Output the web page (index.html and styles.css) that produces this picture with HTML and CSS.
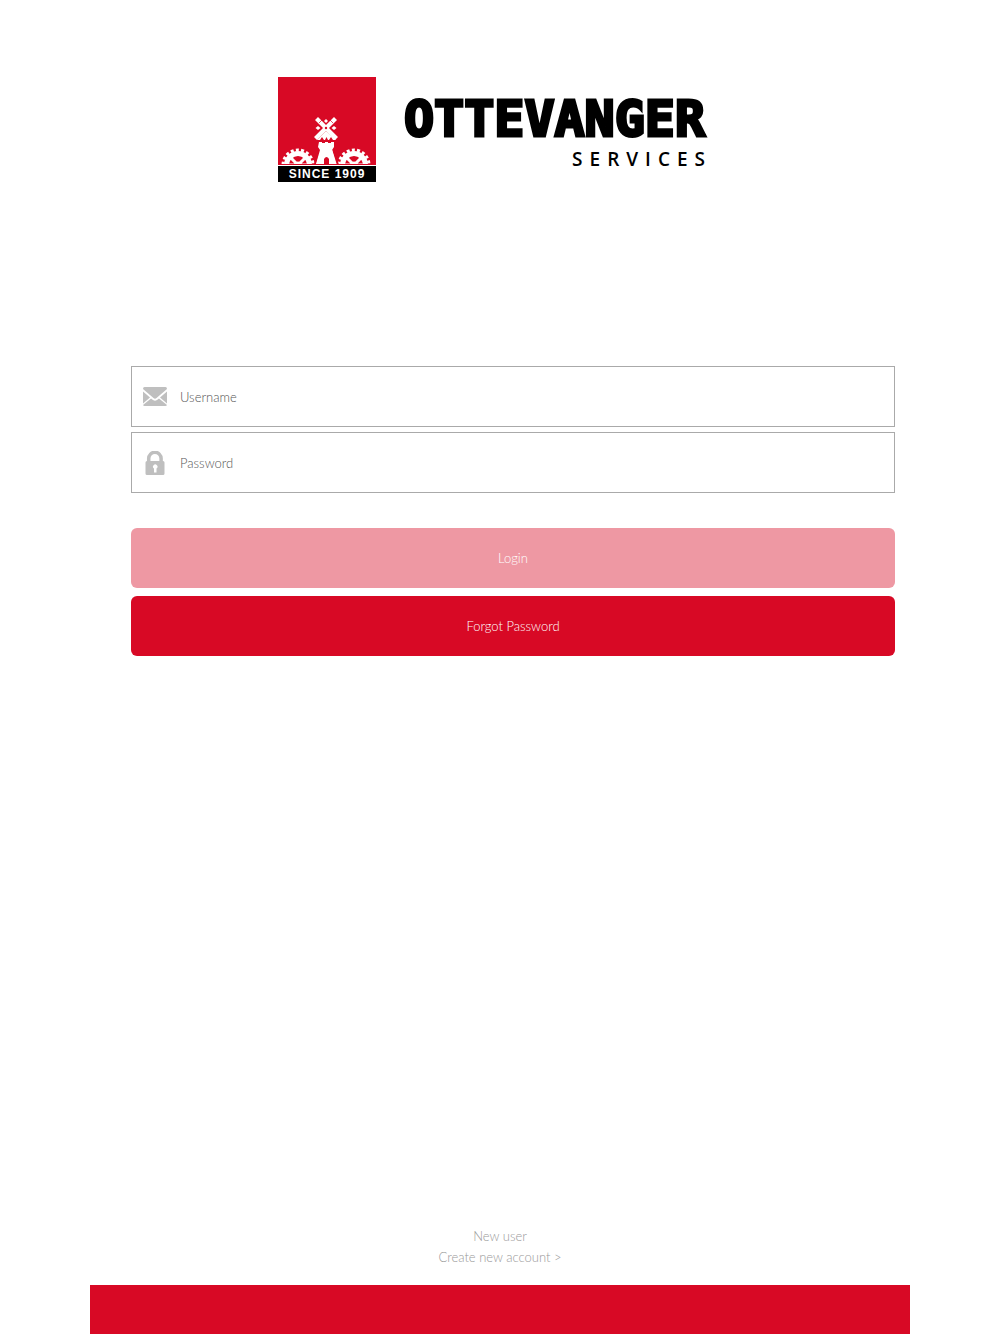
FILE: index.html
```html
<!DOCTYPE html>
<html lang="en">
<head>
<meta charset="utf-8">
<meta name="viewport" content="width=device-width, initial-scale=1">
<title>Ottevanger Services</title>
<link rel="stylesheet" href="styles.css">
</head>
<body>
<header class="brand">
  <div class="mark">
    <svg class="mark-art" viewBox="0 0 98 88" aria-hidden="true">
      <defs>
        <clipPath id="ground"><rect width="98" height="87"/></clipPath>
        <g id="gear" fill="none" stroke="#fff">
          <circle r="11.5" stroke-width="5"/>
          <circle r="15" stroke-width="3" stroke-dasharray="3 2.236"/>
          <path d="M-12 0H12M-8.500-8.500L0 0L8.500-8.500" stroke-width="3"/>
          <circle r="2" stroke-width="3"/>
        </g>
      </defs>
      <rect width="98" height="88" fill="#d80925"/>
      <g clip-path="url(#ground)">
        <use href="#gear" x="20" y="88"/>
        <use href="#gear" x="76" y="88"/>
        <path d="M37 88L42 72V65H55V72L60 88Z" fill="#fff" stroke="#d80925" stroke-width="2"/>
        <path d="M41 65h3v2h3v-2h3v2h3v-2h3v5l-2 3 4 14H38l4-14-2-3z" fill="#fff"/>
        <path d="M46 88v-6q2.500-4 5 0v6z" fill="#d80925"/>
        <path d="M48 54L58 63H39Z" fill="#fff"/>
        <path d="M42 63l2-3 2 3zM47 63l1.500-3 1.500 3zM51 63l2-3 2 3z" fill="#d80925"/>
      </g>
      <path d="M40 40L48 48L56 40L59 43L51 51L60 60L57 63L48 54L39 63L36 60L45 51L37 43Z" fill="#fff"/>
      <path d="M41 46l3-3M55 46l-3-3" stroke="#d80925" stroke-width=".7"/>
      <path d="M48 42l2 2-2 2-2-2zM37.500 51l2.500-2 2.500 2-2.500 2zM53.500 51l2.500-2 2.500 2-2.500 2z" fill="#fff"/>
      <circle cx="48" cy="51" r="1.200" fill="#d80925"/>
    </svg>
    <div class="since">SINCE 1909</div>
  </div>
  <div class="names">
    <h1 class="name">OTTEVANGER</h1>
    <p class="division">SERVICES</p>
  </div>
</header>

<main class="content">
  <form class="login">
    <label class="field">
      <svg class="icon" viewBox="0 0 24 24" aria-hidden="true">
        <path d="M1.500 2H22.500Q24 2 24 4L13.500 13Q12 14.500 10.500 13L0 4Q0 2 1.500 2ZM0 6.500L7 12.500L0 18.500ZM24 6.500V18.500L17 12.500ZM8 13.500L10 15Q12 16.500 14 15L16 13.500L24 20Q23.500 21 22.500 21H1.500Q.5 21 0 20Z" fill="#bfbfbf"/>
      </svg>
      <input class="input" type="text" placeholder="Username" aria-label="Username">
    </label>
    <label class="field">
      <svg class="icon" viewBox="0 0 24 24" aria-hidden="true">
        <path d="M5.700 11V7.500a6.200 6.200 0 0 1 12.400 0V11" fill="none" stroke="#bfbfbf" stroke-width="3.500"/>
        <path fill-rule="evenodd" d="M4 10H20Q21.500 10 21.500 11.500V22.500Q21.500 24 20 24H4Q2.500 24 2.500 22.500V11.500Q2.500 10 4 10ZM11 17.500V21.500H13.500V17.500A2.200 2.200 0 1 0 11 17.500Z" fill="#bfbfbf"/>
      </svg>
      <input class="input" type="password" placeholder="Password" aria-label="Password">
    </label>
    <div class="actions">
      <button class="button button-muted" type="submit">Login</button>
      <button class="button" type="button">Forgot Password</button>
    </div>
  </form>
</main>

<footer class="footer">
  <p class="signup">New user<br><a class="link" href="#">Create new account &gt;</a></p>
  <div class="bar"></div>
</footer>
</body>
</html>
```
FILE: styles.css
```css
* { box-sizing: border-box; }

body {
  margin: 0;
  min-height: 100vh;
  display: flex;
  flex-direction: column;
  background: #fff;
  font-family: Lato, "Open Sans", sans-serif;
  font-size: 13px;
  font-weight: 300;
}

.brand {
  display: flex;
  justify-content: center;
  gap: 28px;
  padding: 77px 17px 0 0;
}

.mark { width: 98px; }
.mark-art { display: block; width: 100%; }

.since {
  margin-top: 1px;
  background: #000;
  color: #fff;
  font: bold 12px/16px "Liberation Sans", Arial, sans-serif;
  letter-spacing: 1px;
  text-align: center;
}

.names {
  display: flex;
  flex-direction: column;
  padding-top: 16px;
  color: #000;
}

.name {
  margin: 0;
  font: bold 50px/52px "DejaVu Sans Mono", monospace;
  -webkit-text-stroke: 3px #000;
}

.division {
  margin: 0 -7px 0 0;
  font: 600 19px/28px "Open Sans", sans-serif;
  letter-spacing: 7px;
  text-align: right;
}

.content {
  flex: 1;
  padding: 184px 10.5% 40px 13.1%;
}

.login {
  display: flex;
  flex-direction: column;
  gap: 5px;
}

.field {
  display: flex;
  align-items: center;
  gap: 13px;
  height: 61px;
  padding: 0 11px;
  border: 1px solid #aaa;
}

.icon { width: 24px; height: 24px; flex: none; }

.input {
  flex: 1;
  min-width: 0;
  height: 100%;
  padding: 0;
  border: 0;
  outline: 0;
  background: none;
  color: #555;
  font: inherit;
}

.input::placeholder { color: #555; opacity: 1; }

.actions {
  display: flex;
  flex-direction: column;
  gap: 8px;
  padding-top: 30px;
}

.button {
  height: 60px;
  border: 0;
  border-radius: 6px;
  background: #d80925;
  color: #fff;
  font: inherit;
}

.button-muted { background: #ee98a3; }

.signup {
  margin: 0 0 17px;
  color: #999;
  line-height: 21px;
  text-align: center;
}

.link { color: inherit; text-decoration: none; }

.bar {
  height: 49px;
  margin: 0 9%;
  background: #d80925;
}
```
